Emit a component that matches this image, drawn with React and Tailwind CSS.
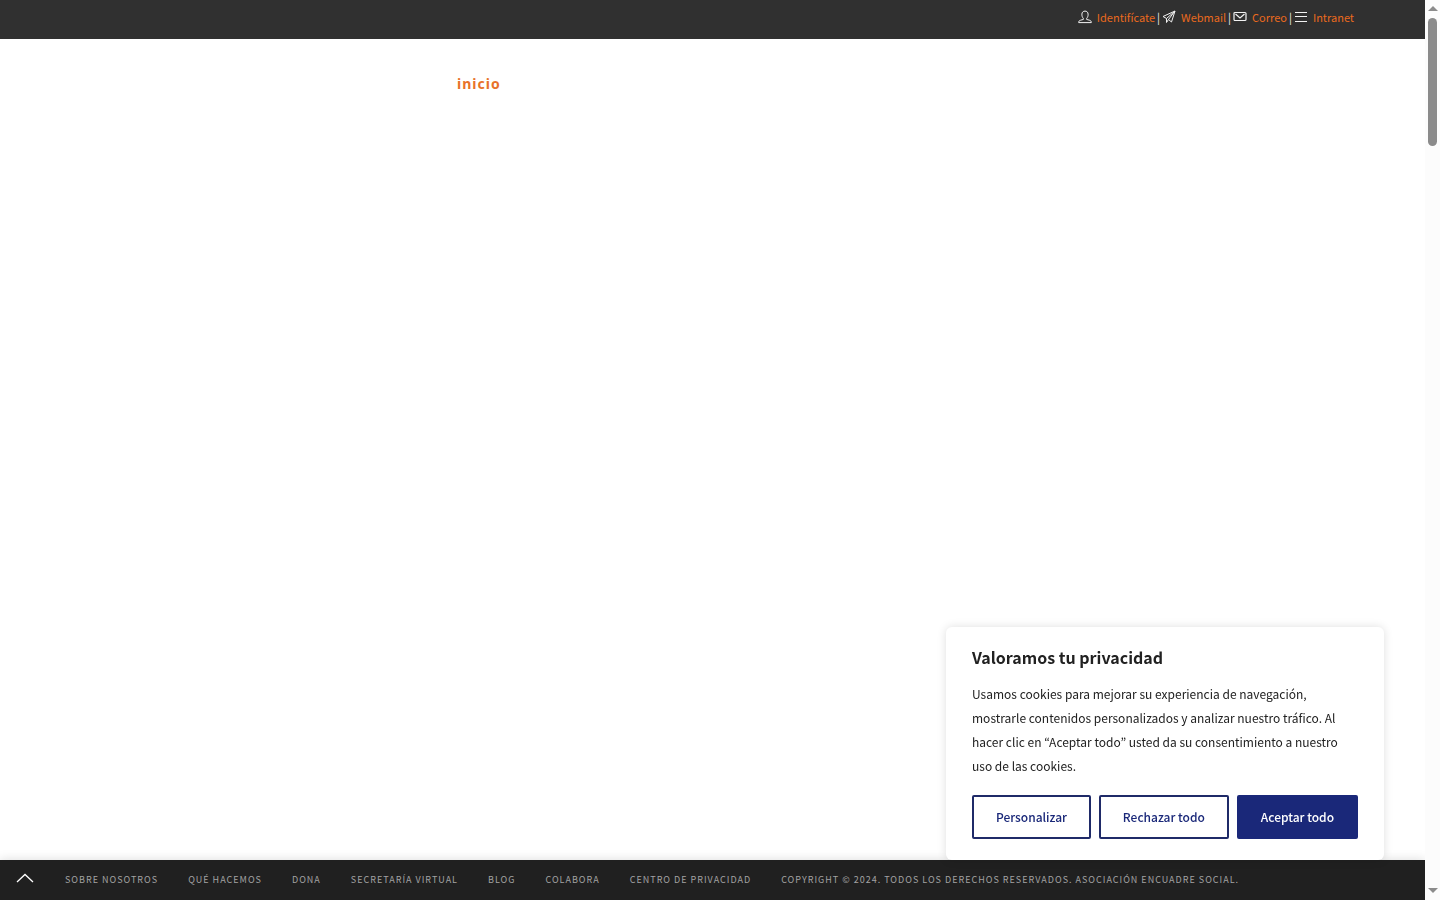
import React from "react";

const footerLinks = [
  "Sobre nosotros",
  "Qué hacemos",
  "Dona",
  "Secretaría virtual",
  "Blog",
  "Colabora",
  "Centro de privacidad",
];

function Icon({ children }) {
  return (
    <svg
      className="block h-[14px] w-[14px] shrink-0"
      viewBox="0 0 14 14"
      fill="none"
      stroke="#f2f2f2"
      strokeWidth="1"
      aria-hidden="true"
    >
      {children}
    </svg>
  );
}

const topLinks = [
  {
    label: "Identifícate",
    icon: (
      <Icon>
        <path d="M5.3 8.3C4.2 7.2 3.8 5.6 3.9 4.1C4 2.2 5.2 1.1 7 1.1s3 1.1 3.1 3c.1 1.500-.3 3.100-1.400 4.200v1.200c1.700.4 3.600.8 4.200 1.500.3.400.4 1 .4 1.600H.7c0-.6.1-1.200.4-1.600.6-.7 2.500-1.100 4.200-1.500z" />
      </Icon>
    ),
  },
  {
    label: "Webmail",
    icon: (
      <Icon>
        <path
          d="M13 1L1 6.500l3.500 2M13 1L9.500 12 6.500 9.500M13 1L4.500 8.500v4l2-3L13 1"
          strokeLinejoin="round"
        />
      </Icon>
    ),
  },
  {
    label: "Correo",
    icon: (
      <Icon>
        <rect x="1" y="2.500" width="12" height="8" rx="1" strokeWidth="1.200" />
        <path d="M2.500 4L7 8l4.500-4" strokeWidth="1.200" />
      </Icon>
    ),
  },
  {
    label: "Intranet",
    icon: (
      <Icon>
        <path d="M1 2.500h12M1 6.500h12M1 11.500h12" />
      </Icon>
    ),
  },
];

function TopBar() {
  return (
    <header className="flex h-[39px] shrink-0 justify-end bg-[#303030] pr-[71px]">
      <nav className="flex h-[33px] items-center text-[11px] leading-4" aria-label="Accesos">
        {topLinks.map((link, i) => (
          <React.Fragment key={link.label}>
            {i > 0 && <span className="px-[2px] text-[#eeeeee]">|</span>}
            {link.icon}
            <a href="#" className="ml-[5px] text-[#ea6a1e]">
              {link.label}
            </a>
          </React.Fragment>
        ))}
      </nav>
    </header>
  );
}

function CookieNotice() {
  return (
    <section
      className="fixed right-14 bottom-10 z-20 w-[438px] rounded-md bg-white px-[26px] pt-[17px] pb-[21px] text-[#212121] shadow-[0_0_10px_rgba(0,0,0,0.13)]"
      aria-labelledby="cookie-title"
    >
      <h2 id="cookie-title" className="text-[16px] leading-[26px] font-bold">
        Valoramos tu privacidad
      </h2>
      <p className="mt-3 text-[12px] leading-6">
        Usamos cookies para mejorar su experiencia de navegación, mostrarle contenidos
        personalizados y analizar nuestro tráfico. Al hacer clic en “Aceptar todo” usted da su
        consentimiento a nuestro uso de las cookies.
      </p>
      <div className="mt-[17px] flex gap-2 text-[12px] leading-6 font-medium text-[#1a2879]">
        <button className="h-11 grow rounded-[2px] border-2 border-[#1f2a68]">Personalizar</button>
        <button className="h-11 grow rounded-[2px] border-2 border-[#1f2a68]">
          Rechazar todo
        </button>
        <button className="h-11 grow rounded-[2px] border-2 border-[#1a2879] bg-[#1a2879] text-white">
          Aceptar todo
        </button>
      </div>
    </section>
  );
}

function Footer() {
  return (
    <footer className="flex h-10 shrink-0 items-center gap-[30px] bg-[#202020] pl-4 text-[9px] leading-4 tracking-[1px] whitespace-nowrap text-[#a3a3a3] uppercase shadow-[0_0_10px_rgba(0,0,0,0.15)]">
      <a href="#top" aria-label="Volver arriba">
        <svg className="block h-[14px] w-[19px]" viewBox="0 0 19 14" fill="none" aria-hidden="true">
          <path d="M1 9L9 1.500 17 9" stroke="#ffffff" strokeWidth="1.300" />
        </svg>
      </a>
      {footerLinks.map((label) => (
        <a href="#" key={label}>
          {label}
        </a>
      ))}
      <span>Copyright © 2024. Todos los derechos reservados. Asociación Encuadre Social.</span>
    </footer>
  );
}

function ScrollBar() {
  return (
    <div
      className="flex w-[15px] shrink-0 flex-col items-center justify-between bg-[#fcfcfc] pt-[6px] pb-[7px]"
      aria-hidden="true"
    >
      <div className="flex flex-col items-center gap-[7px]">
        <svg className="block h-[5px] w-[10px]" viewBox="0 0 10 5">
          <path d="M0 5L5 0l5 5z" fill="#8b8b8b" />
        </svg>
        <div className="h-32 w-[9px] rounded-full bg-[#8b8b8b]" />
      </div>
      <svg className="block h-[5px] w-[10px]" viewBox="0 0 10 5">
        <path d="M0 0h10L5 5z" fill="#8b8b8b" />
      </svg>
    </div>
  );
}

export default function App() {
  return (
    <div
      id="top"
      className="flex h-screen bg-white font-['Noto_Sans_CJK_KR','Noto_Sans',sans-serif]"
    >
      <div className="flex min-w-0 flex-1 flex-col">
        <TopBar />
        <main className="flex-1">
          <nav className="pt-[31px] pl-[457px]" aria-label="Principal">
            <a
              href="#"
              className="font-['Noto_Sans',sans-serif] text-[14px] leading-[22px] font-bold tracking-[1px] text-[#e8722a]"
            >
              inicio
            </a>
          </nav>
        </main>
        <Footer />
      </div>
      <ScrollBar />
      <CookieNotice />
    </div>
  );
}
